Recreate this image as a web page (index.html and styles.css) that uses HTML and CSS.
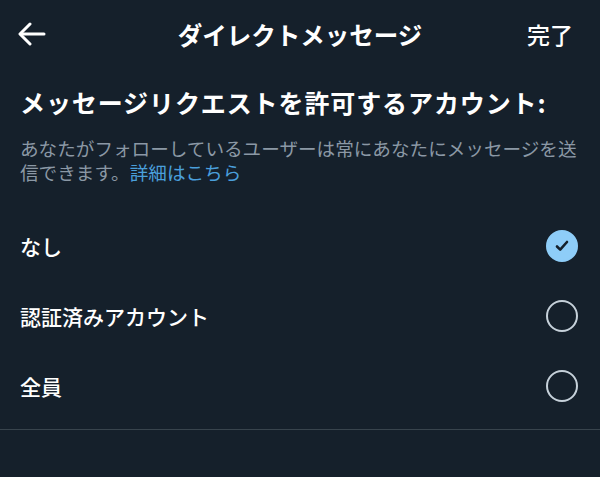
FILE: index.html
```html
<!DOCTYPE html>
<html lang="ja">
<head>
    <meta charset="UTF-8">
    <meta name="viewport" content="width=device-width, initial-scale=1.0">
    <title>ダイレクトメッセージ</title>
    <link rel="stylesheet" href="styles.css">
</head>
<body>
    <div class="topbar">
        <a class="back" href="#" aria-label="戻る">
            <svg width="28" height="24" viewBox="0 0 28 24" fill="none" stroke="#fff" stroke-width="3" stroke-linecap="round" stroke-linejoin="round">
                <path d="M26 12H3"/>
                <path d="M12 2L2 12l10 10"/>
            </svg>
        </a>
        <div class="title">ダイレクトメッセージ</div>
        <a class="done" href="#">完了</a>
    </div>

    <div class="content">
        <h1>メッセージリクエストを許可するアカウント:</h1>
        <p class="desc">あなたがフォローしているユーザーは常にあなたにメッセージを送信できます。<a href="#">詳細はこちら</a></p>

        <div class="options">
            <label class="option">
                <span>なし</span>
                <span class="radio checked">
                    <svg width="14" height="12" viewBox="0 0 14 12" fill="none" stroke="#15202b" stroke-width="2.6" stroke-linecap="round" stroke-linejoin="round">
                        <path d="M2 6.5l3.2 3.2L12 2"/>
                    </svg>
                </span>
            </label>
            <label class="option">
                <span>認証済みアカウント</span>
                <span class="radio"></span>
            </label>
            <label class="option">
                <span>全員</span>
                <span class="radio"></span>
            </label>
        </div>
    </div>
</body>
</html>
```

FILE: styles.css
```css
* { margin: 0; padding: 0; box-sizing: border-box; }
body {
    background-color: #15202b;
    color: #fff;
    font-family: "Noto Sans CJK JP", "Noto Sans", sans-serif;
    width: 600px;
    height: 477px;
    overflow: hidden;
}

.topbar {
    height: 68px;
    display: flex;
    align-items: center;
    justify-content: space-between;
    padding: 0 27px 0 18px;
    position: relative;
}
.back {
    display: flex;
    align-items: center;
}
.title {
    position: absolute;
    left: 0;
    right: 0;
    text-align: center;
    font-size: 24.5px;
    font-weight: 700;
    pointer-events: none;
}
.done {
    color: #fff;
    text-decoration: none;
    font-size: 23px;
    font-weight: 500;
}

.content {
    padding: 16px 0 0;
}
h1 {
    font-size: 25px;
    font-weight: 700;
    line-height: 36px;
    padding: 0 20px;
    letter-spacing: 0.9px;
}
.desc {
    color: #8b98a5;
    font-size: 18.6px;
    line-height: 24px;
    padding: 16px 8px 0 20px;
}
.desc a {
    color: #4a9fdb;
    text-decoration: none;
}

.options {
    margin-top: 27px;
    border-bottom: 1px solid #38444d;
    padding-bottom: 8px;
}
.option {
    height: 70px;
    display: flex;
    align-items: center;
    justify-content: space-between;
    padding: 0 22px 0 20px;
    font-size: 21px;
    font-weight: 500;
}
.radio {
    width: 32px;
    height: 32px;
    border-radius: 50%;
    border: 2.5px solid #c6d1da;
    display: flex;
    align-items: center;
    justify-content: center;
}
.radio.checked {
    background: #8ecdf8;
    border-color: #8ecdf8;
}
```
